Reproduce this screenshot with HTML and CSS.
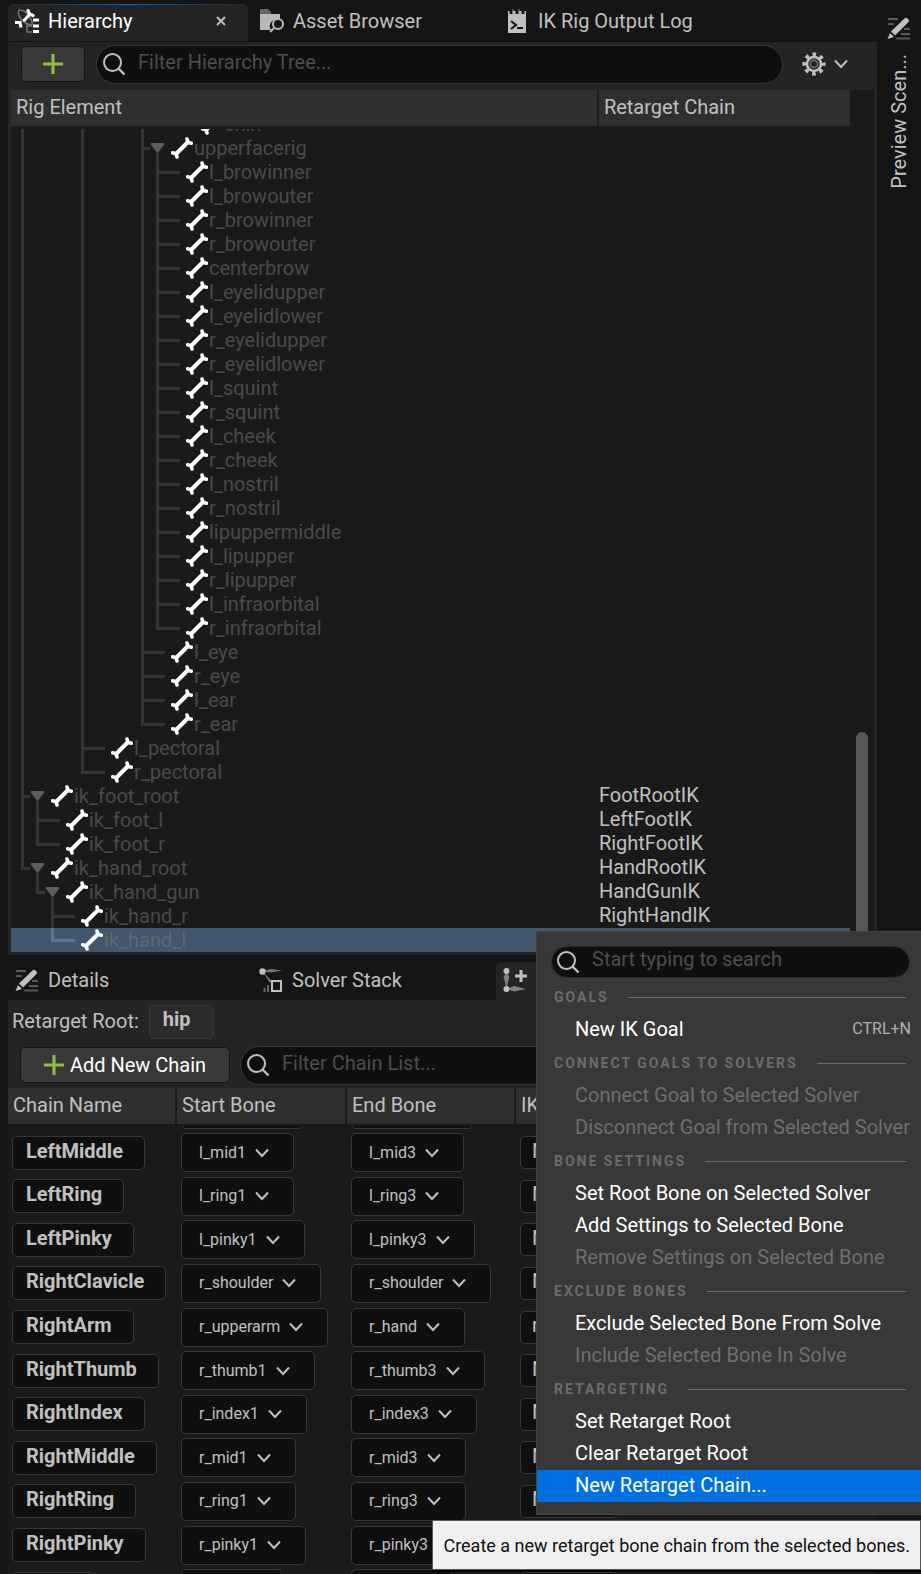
FILE: index.html
```html
<!DOCTYPE html>
<html lang="en">
<head>
<meta charset="utf-8">
<title>IK Rig Editor</title>
<link rel="stylesheet" href="styles.css">
</head>
<body>
<svg class="defs" aria-hidden="true">
  <symbol id="bone" viewBox="0 0 22 22"><path d="M16 2l1 3.200 3.400 1M6 20l-1-3.200-3.400-1" fill="none" stroke="#fff" stroke-width="3.600" stroke-linecap="round" stroke-linejoin="round"/><path d="M5 17l12-12" stroke="#fff" stroke-width="4"/></symbol>
  <symbol id="arrow" viewBox="0 0 15 24"><path d="M1.500 7h12q1.500 .5 .6 1.800l-5.400 7q-1.200 1.200-2.400 0l-5.400-7Q0 7.500 1.500 7z" fill="#5e5e5e"/></symbol>
  <symbol id="magnifier" viewBox="0 0 24 24"><circle cx="10.500" cy="10.500" r="8.500" fill="none" stroke="#c0c0c0" stroke-width="2"/><path d="M16.500 16.500l6 6" stroke="#c0c0c0" stroke-width="2.400"/></symbol>
  <symbol id="plus" viewBox="0 0 20 20"><path d="M10 0v20M0 10h20" stroke="#8bc24a" stroke-width="3"/></symbol>
  <symbol id="chevron" viewBox="0 0 14 10"><path d="M1 1.500l6 6.500 6-6.500" fill="none" stroke="#c0c0c0" stroke-width="2"/></symbol>
  <symbol id="pencil" viewBox="0 0 24 24"><path d="M1 3h10M1 8h6M17 13h6M14 18h9M9 22.500h14" stroke="#5a5a5a" stroke-width="1.800"/><path d="M17.500 2.500q1.500-1.500 3 0l1 1q1 1.500 0 2.500L8 19.500l-4-4zM3 17l4 4-6.500 2z" fill="#c0c0c0"/></symbol>
</svg>

<div class="editor">
  <div class="main">
    <nav class="tabs top-tabs">
      <div class="tab active">
        <svg class="tab-icon" viewBox="0 0 24 24"><path d="M4 1q-2 4 2 9t11 6M4 1q6 0 10 6t3 9" fill="none" stroke="#777" stroke-width="1.500"/><path d="M9.500 11l5.500-6M13 1.500l1.500 3.500 3.500 1.500" fill="none" stroke="#fff" stroke-width="3.200" stroke-linecap="round"/><path d="M0 13.500h5l1 5" fill="none" stroke="#fff" stroke-width="3.200"/><path d="M17 17h-5v6h5M12 17v-2" fill="none" stroke="#777" stroke-width="1.500"/><path d="M18 11h6M18 17h6M18 22.500h6" stroke="#fff" stroke-width="3"/></svg>
        <span>Hierarchy</span>
        <button class="close" aria-label="Close tab"><svg viewBox="0 0 10 10"><path d="M1 1l8 8M9 1l-8 8" stroke="#c0c0c0" stroke-width="2"/></svg></button>
      </div>
      <div class="tab">
        <svg class="tab-icon" viewBox="0 0 24 24"><path d="M0 1q0-1 1-1h7l3 3v3H0z" fill="#666"/><path d="M0 5h20v6a7 7 0 0 0-9 10H0z" fill="#b8b8b8"/><circle cx="18" cy="15" r="5" fill="none" stroke="#b8b8b8" stroke-width="2"/><path d="M14 19l-4 4" stroke="#b8b8b8" stroke-width="2"/></svg>
        <span>Asset Browser</span>
      </div>
      <div class="tab">
        <svg class="tab-icon" viewBox="0 0 24 24"><path d="M3 2h18v22H3z" fill="#c0c0c0"/><path d="M6 0v5M12 0v5M18 0v5" stroke="#161616" stroke-width="3"/><path d="M8 0v5M14 0v5" stroke="#888"/><path d="M6 12l5 4-5 4M12 19h6" fill="none" stroke="#161616" stroke-width="2.200"/></svg>
        <span>IK Rig Output Log</span>
      </div>
    </nav>

    <section class="panel hierarchy">
      <div class="toolbar">
        <button class="btn add" aria-label="Add"><svg><use href="#plus"/></svg></button>
        <label class="search"><svg><use href="#magnifier"/></svg><input type="text" placeholder="Filter Hierarchy Tree..." aria-label="Filter hierarchy tree"></label>
        <button class="options" aria-label="Options">
          <svg class="gear" viewBox="0 0 24 24"><circle cx="12" cy="12" r="9.600" fill="none" stroke="#c0c0c0" stroke-width="4" stroke-dasharray="3.600 3.940" stroke-dashoffset="1.800"/><circle cx="12" cy="12" r="7" fill="none" stroke="#c0c0c0" stroke-width="2.600"/><circle cx="12" cy="12" r="3.600" fill="none" stroke="#707070" stroke-width="1.600"/></svg>
          <svg class="chev"><use href="#chevron"/></svg>
        </button>
      </div>
      <div class="tree-area">
        <table class="tree">
          <thead><tr><th>Rig Element</th><th>Retarget Chain</th></tr></thead>
          <tbody>
            <tr><td><i class="v w4"></i><i class="v w4"></i><i class="v w2"></i><i class="gap"></i><svg class="bone"><use href="#bone"/></svg>chin</td><td></td></tr>
            <tr><td><i class="v w4"></i><i class="v w4"></i><i class="v t branch"></i><button class="fold" aria-label="Collapse"><svg><use href="#arrow"/></svg></button><svg class="bone"><use href="#bone"/></svg>upperfacerig</td><td></td></tr>
            <tr><td><i class="v w4"></i><i class="v w4"></i><i class="v"></i><i class="v t leaf"></i><svg class="bone"><use href="#bone"/></svg>l_browinner</td><td></td></tr>
            <tr><td><i class="v w4"></i><i class="v w4"></i><i class="v"></i><i class="v t leaf"></i><svg class="bone"><use href="#bone"/></svg>l_browouter</td><td></td></tr>
            <tr><td><i class="v w4"></i><i class="v w4"></i><i class="v"></i><i class="v t leaf"></i><svg class="bone"><use href="#bone"/></svg>r_browinner</td><td></td></tr>
            <tr><td><i class="v w4"></i><i class="v w4"></i><i class="v"></i><i class="v t leaf"></i><svg class="bone"><use href="#bone"/></svg>r_browouter</td><td></td></tr>
            <tr><td><i class="v w4"></i><i class="v w4"></i><i class="v"></i><i class="v t leaf"></i><svg class="bone"><use href="#bone"/></svg>centerbrow</td><td></td></tr>
            <tr><td><i class="v w4"></i><i class="v w4"></i><i class="v"></i><i class="v t leaf"></i><svg class="bone"><use href="#bone"/></svg>l_eyelidupper</td><td></td></tr>
            <tr><td><i class="v w4"></i><i class="v w4"></i><i class="v"></i><i class="v t leaf"></i><svg class="bone"><use href="#bone"/></svg>l_eyelidlower</td><td></td></tr>
            <tr><td><i class="v w4"></i><i class="v w4"></i><i class="v"></i><i class="v t leaf"></i><svg class="bone"><use href="#bone"/></svg>r_eyelidupper</td><td></td></tr>
            <tr><td><i class="v w4"></i><i class="v w4"></i><i class="v"></i><i class="v t leaf"></i><svg class="bone"><use href="#bone"/></svg>r_eyelidlower</td><td></td></tr>
            <tr><td><i class="v w4"></i><i class="v w4"></i><i class="v"></i><i class="v t leaf"></i><svg class="bone"><use href="#bone"/></svg>l_squint</td><td></td></tr>
            <tr><td><i class="v w4"></i><i class="v w4"></i><i class="v"></i><i class="v t leaf"></i><svg class="bone"><use href="#bone"/></svg>r_squint</td><td></td></tr>
            <tr><td><i class="v w4"></i><i class="v w4"></i><i class="v"></i><i class="v t leaf"></i><svg class="bone"><use href="#bone"/></svg>l_cheek</td><td></td></tr>
            <tr><td><i class="v w4"></i><i class="v w4"></i><i class="v"></i><i class="v t leaf"></i><svg class="bone"><use href="#bone"/></svg>r_cheek</td><td></td></tr>
            <tr><td><i class="v w4"></i><i class="v w4"></i><i class="v"></i><i class="v t leaf"></i><svg class="bone"><use href="#bone"/></svg>l_nostril</td><td></td></tr>
            <tr><td><i class="v w4"></i><i class="v w4"></i><i class="v"></i><i class="v t leaf"></i><svg class="bone"><use href="#bone"/></svg>r_nostril</td><td></td></tr>
            <tr><td><i class="v w4"></i><i class="v w4"></i><i class="v"></i><i class="v t leaf"></i><svg class="bone"><use href="#bone"/></svg>lipuppermiddle</td><td></td></tr>
            <tr><td><i class="v w4"></i><i class="v w4"></i><i class="v"></i><i class="v t leaf"></i><svg class="bone"><use href="#bone"/></svg>l_lipupper</td><td></td></tr>
            <tr><td><i class="v w4"></i><i class="v w4"></i><i class="v"></i><i class="v t leaf"></i><svg class="bone"><use href="#bone"/></svg>r_lipupper</td><td></td></tr>
            <tr><td><i class="v w4"></i><i class="v w4"></i><i class="v"></i><i class="v t leaf"></i><svg class="bone"><use href="#bone"/></svg>l_infraorbital</td><td></td></tr>
            <tr><td><i class="v w4"></i><i class="v w4"></i><i class="v"></i><i class="v t leaf last"></i><svg class="bone"><use href="#bone"/></svg>r_infraorbital</td><td></td></tr>
            <tr><td><i class="v w4"></i><i class="v w4"></i><i class="v t leaf"></i><svg class="bone"><use href="#bone"/></svg>l_eye</td><td></td></tr>
            <tr><td><i class="v w4"></i><i class="v w4"></i><i class="v t leaf"></i><svg class="bone"><use href="#bone"/></svg>r_eye</td><td></td></tr>
            <tr><td><i class="v w4"></i><i class="v w4"></i><i class="v t leaf"></i><svg class="bone"><use href="#bone"/></svg>l_ear</td><td></td></tr>
            <tr><td><i class="v w4"></i><i class="v w4"></i><i class="v t leaf last"></i><svg class="bone"><use href="#bone"/></svg>r_ear</td><td></td></tr>
            <tr><td><i class="v w4"></i><i class="v t leaf"></i><svg class="bone"><use href="#bone"/></svg>l_pectoral</td><td></td></tr>
            <tr><td><i class="v w4"></i><i class="v t leaf last"></i><svg class="bone"><use href="#bone"/></svg>r_pectoral</td><td></td></tr>
            <tr><td><i class="v t branch"></i><button class="fold" aria-label="Collapse"><svg><use href="#arrow"/></svg></button><svg class="bone"><use href="#bone"/></svg>ik_foot_root</td><td>FootRootIK</td></tr>
            <tr><td><i class="v"></i><i class="v t leaf"></i><svg class="bone"><use href="#bone"/></svg>ik_foot_l</td><td>LeftFootIK</td></tr>
            <tr><td><i class="v"></i><i class="v t leaf last"></i><svg class="bone"><use href="#bone"/></svg>ik_foot_r</td><td>RightFootIK</td></tr>
            <tr><td><i class="v t branch last"></i><button class="fold" aria-label="Collapse"><svg><use href="#arrow"/></svg></button><svg class="bone"><use href="#bone"/></svg>ik_hand_root</td><td>HandRootIK</td></tr>
            <tr><td><i></i><i class="v t branch last"></i><button class="fold" aria-label="Collapse"><svg><use href="#arrow"/></svg></button><svg class="bone"><use href="#bone"/></svg>ik_hand_gun</td><td>HandGunIK</td></tr>
            <tr><td><i></i><i></i><i class="v t leaf"></i><svg class="bone"><use href="#bone"/></svg>ik_hand_r</td><td>RightHandIK</td></tr>
            <tr class="selected"><td><i></i><i></i><i class="v t leaf last"></i><svg class="bone"><use href="#bone"/></svg>ik_hand_l</td><td></td></tr>
          </tbody>
        </table>
        <div class="rail"><div class="thumb"></div></div>
      </div>
    </section>

    <nav class="tabs bottom-tabs">
      <div class="tab"><svg class="tab-icon"><use href="#pencil"/></svg><span>Details</span></div>
      <div class="tab">
        <svg class="tab-icon" viewBox="0 0 24 24"><path d="M3 3l9-2 11 1.500-11 2zM4 4l9 9-2 2z" fill="#777"/><circle cx="3.500" cy="3.500" r="3.200" fill="#c0c0c0"/><path d="M5.500 20v4M9 17v7" stroke="#666" stroke-width="2"/><path d="M13 13h9v10h-9z" fill="none" stroke="#c0c0c0" stroke-width="2"/></svg>
        <span>Solver Stack</span>
      </div>
      <div class="tab active">
        <svg class="tab-icon" viewBox="0 0 24 24"><path d="M3.500 4l3 5-2.500 9h-1L.5 9zM4 21l7-3 12 3-12 2.500z" fill="#808080"/><circle cx="3.500" cy="3" r="3" fill="#c0c0c0"/><circle cx="3.500" cy="21" r="3" fill="#c0c0c0"/><path d="M18 2v12M12 8h12" stroke="#c0c0c0" stroke-width="3"/></svg>
        <span>IK Retargeting</span>
      </div>
    </nav>

    <section class="panel retarget">
      <div class="root-row"><span>Retarget Root:</span><button class="root-bone">hip</button></div>
      <div class="chain-tools">
        <button class="btn add-chain"><svg><use href="#plus"/></svg>Add New Chain</button>
        <label class="search"><svg><use href="#magnifier"/></svg><input type="text" placeholder="Filter Chain List..." aria-label="Filter chain list"></label>
      </div>
      <table class="chains">
        <thead><tr><th>Chain Name</th><th>Start Bone</th><th>End Bone</th><th>IK Goal</th><th></th></tr></thead>
        <tbody>
          <tr class="partial"><td></td><td><button class="combo" aria-label="Start bone"></button></td><td><button class="combo" aria-label="End bone"></button></td><td></td><td></td></tr>
          <tr><td><button class="name">LeftMiddle</button></td><td><button class="combo">l_mid1<svg><use href="#chevron"/></svg></button></td><td><button class="combo">l_mid3<svg><use href="#chevron"/></svg></button></td><td><button class="goal">None</button></td><td></td></tr>
          <tr><td><button class="name">LeftRing</button></td><td><button class="combo">l_ring1<svg><use href="#chevron"/></svg></button></td><td><button class="combo">l_ring3<svg><use href="#chevron"/></svg></button></td><td><button class="goal">None</button></td><td></td></tr>
          <tr><td><button class="name">LeftPinky</button></td><td><button class="combo">l_pinky1<svg><use href="#chevron"/></svg></button></td><td><button class="combo">l_pinky3<svg><use href="#chevron"/></svg></button></td><td><button class="goal">None</button></td><td></td></tr>
          <tr><td><button class="name">RightClavicle</button></td><td><button class="combo">r_shoulder<svg><use href="#chevron"/></svg></button></td><td><button class="combo">r_shoulder<svg><use href="#chevron"/></svg></button></td><td><button class="goal">None</button></td><td></td></tr>
          <tr><td><button class="name">RightArm</button></td><td><button class="combo">r_upperarm<svg><use href="#chevron"/></svg></button></td><td><button class="combo">r_hand<svg><use href="#chevron"/></svg></button></td><td><button class="goal">r_hand</button></td><td></td></tr>
          <tr><td><button class="name">RightThumb</button></td><td><button class="combo">r_thumb1<svg><use href="#chevron"/></svg></button></td><td><button class="combo">r_thumb3<svg><use href="#chevron"/></svg></button></td><td><button class="goal">None</button></td><td></td></tr>
          <tr><td><button class="name">RightIndex</button></td><td><button class="combo">r_index1<svg><use href="#chevron"/></svg></button></td><td><button class="combo">r_index3<svg><use href="#chevron"/></svg></button></td><td><button class="goal">None</button></td><td></td></tr>
          <tr><td><button class="name">RightMiddle</button></td><td><button class="combo">r_mid1<svg><use href="#chevron"/></svg></button></td><td><button class="combo">r_mid3<svg><use href="#chevron"/></svg></button></td><td><button class="goal">None</button></td><td></td></tr>
          <tr><td><button class="name">RightRing</button></td><td><button class="combo">r_ring1<svg><use href="#chevron"/></svg></button></td><td><button class="combo">r_ring3<svg><use href="#chevron"/></svg></button></td><td><button class="goal">None</button></td><td></td></tr>
          <tr><td><button class="name">RightPinky</button></td><td><button class="combo">r_pinky1<svg><use href="#chevron"/></svg></button></td><td><button class="combo">r_pinky3<svg><use href="#chevron"/></svg></button></td><td><button class="goal">None</button></td><td></td></tr>
          <tr class="partial"><td><button class="name" aria-label="Chain name"></button></td><td><button class="combo" aria-label="Start bone"></button></td><td><button class="combo" aria-label="End bone"></button></td><td><button class="goal" aria-label="Goal"></button></td><td></td></tr>
        </tbody>
      </table>
    </section>
  </div>

  <aside class="sidebar">
    <svg class="tab-icon"><use href="#pencil"/></svg>
    <span>Preview Scen...</span>
  </aside>
</div>

<div class="menu">
  <label class="search"><svg><use href="#magnifier"/></svg><input type="text" placeholder="Start typing to search" aria-label="Search menu"></label>
  <h2>Goals</h2>
  <button class="item">New IK Goal<kbd>CTRL+N</kbd></button>
  <h2>Connect Goals to Solvers</h2>
  <button class="item" disabled>Connect Goal to Selected Solver</button>
  <button class="item" disabled>Disconnect Goal from Selected Solver</button>
  <h2>Bone Settings</h2>
  <button class="item">Set Root Bone on Selected Solver</button>
  <button class="item">Add Settings to Selected Bone</button>
  <button class="item" disabled>Remove Settings on Selected Bone</button>
  <h2>Exclude Bones</h2>
  <button class="item">Exclude Selected Bone From Solve</button>
  <button class="item" disabled>Include Selected Bone In Solve</button>
  <h2>Retargeting</h2>
  <button class="item">Set Retarget Root</button>
  <button class="item">Clear Retarget Root</button>
  <button class="item current">New Retarget Chain...</button>
</div>
<div class="tooltip" role="tooltip">Create a new retarget bone chain from the selected bones.</div>
</body>
</html>
```
FILE: styles.css
```css
:root {
  --frame: #151515;
  --panel: #242424;
  --list: #1a1a1a;
  --header: #2f2f2f;
  --field: #0f0f0f;
  --edge: #383838;
  --text: #c0c0c0;
  --wire: #353535;
}

* { box-sizing: border-box; }

body {
  margin: 0;
  position: relative;
  height: 100vh;
  overflow: hidden;
  background: var(--frame);
  color: var(--text);
  font: 20px/24px Roboto, "Liberation Sans", sans-serif;
  white-space: nowrap;
}

button, input {
  font: inherit;
  color: inherit;
  background: none;
  border: 0;
  padding: 0;
  margin: 0;
  outline: 0;
}

svg { display: block; flex: none; }
.defs { display: none; }

.editor { display: flex; height: 100%; }
.main {
  flex: 1;
  min-width: 0;
  display: flex;
  flex-direction: column;
  padding-left: 8px;
}

/* Tabs */
.tabs { display: flex; gap: 5px; flex: none; }
.top-tabs { height: 42px; padding: 4px 0 1px; }
.bottom-tabs { height: 45px; padding-top: 7px; }
.tab {
  display: flex;
  align-items: center;
  gap: 9px;
  width: 240px;
  padding: 0 14px 3px 7px;
  border-radius: 6px 6px 0 0;
}
.bottom-tabs .tab { gap: 9px; width: 239px; }
.tab-icon { width: 24px; height: 24px; }
.tab.active { background: var(--panel); }
.top-tabs .active {
  color: #fff;
  background: linear-gradient(90deg, transparent, #0070e0, transparent) top / 100% 1px no-repeat, var(--panel);
}
.close { margin-left: auto; padding: 8px; }
.close svg { width: 10px; height: 10px; }

/* Shared controls */
.panel { background: var(--panel); }
.btn {
  display: flex;
  align-items: center;
  justify-content: center;
  gap: 6px;
  height: 36px;
  color: #fff;
  background: #383838;
  border: 1px solid #141414;
  border-radius: 5px;
}
.btn svg { width: 20px; height: 20px; }
.search {
  display: flex;
  align-items: center;
  flex: 1;
  gap: 12px;
  height: 39px;
  padding: 0 5px;
  background: var(--field);
  border: 1px solid var(--edge);
  border-radius: 20px;
}
.search svg { width: 24px; height: 24px; }
.search input { flex: 1; min-width: 0; height: 28px; padding-bottom: 4px; }
.search input::placeholder { color: #4e4e4e; opacity: 1; }

/* Hierarchy panel */
.hierarchy { flex: none; padding: 0 3px 3px; }
.toolbar {
  display: flex;
  align-items: center;
  height: 48px;
  padding: 0 26px 4px 10px;
}
.add { width: 64px; margin-right: 11px; }
.options { display: flex; align-items: center; gap: 8px; margin-left: 19px; }
.gear { width: 24px; height: 24px; }
.chev { width: 14px; height: 10px; }

.tree-area { display: flex; background: var(--list); }
.tree { flex: 1; display: block; }
.tree thead, .tree tbody { display: block; }
.tree tr {
  display: grid;
  grid-template-columns: 7fr 3fr;
  gap: 2px;
}
.tree th {
  height: 36px;
  padding: 5px;
  background: var(--header);
  font-weight: 400;
  text-align: left;
}
.tree tbody { height: 823px; margin-top: 3px; overflow: hidden; }
.tree tbody tr { height: 24px; }
.tree tbody tr:first-child { margin-top: -17px; }
.tree td { padding: 0; }
.tree td:last-child { line-height: 22px; }
.tree td:first-child { display: flex; padding-left: 10px; color: #4a4a4a; }
.tree i { flex: none; width: 15px; height: 24px; }
.tree .v { background: linear-gradient(var(--wire), var(--wire)) 0 0 / 3px 100% no-repeat; }
.tree .t {
  background:
    linear-gradient(var(--wire), var(--wire)) 0 0 / 3px 100% no-repeat,
    linear-gradient(var(--wire), var(--wire)) 3px 11px / 21px 3px no-repeat;
}
.tree .last { background-size: 3px 14px, 21px 3px; }
.tree .w4 { width: 60px; }
.tree .w2 { width: 30px; }
.tree .gap { width: 30px; }
.tree .leaf { width: 30px; }
.tree .branch { width: 9px; }
.fold {
  width: 15px;
  height: 24px;
  margin-right: 6px;
  background: linear-gradient(var(--wire), var(--wire)) 6px 14px / 3px 10px no-repeat;
}
.fold svg { width: 15px; height: 24px; }
.bone { width: 22px; height: 22px; margin: 1px 1px 0 0; }
.selected { --wire: #5d7690; background: #42566e; }
.tree .selected td:first-child { color: #5f6872; }

.rail { width: 24px; padding: 642px 6px 0; }
.thumb { height: 100%; background: #575757; border-radius: 6px 6px 0 0; }

/* Retarget panel */
.retarget { flex: 1; min-height: 0; overflow: hidden; }
.root-row {
  display: flex;
  align-items: center;
  gap: 10px;
  height: 43px;
  padding-left: 4px;
}
.root-row span { padding-bottom: 2px; }
.root-bone {
  height: 34px;
  padding: 0 22px 6px 13px;
  background: #2b2b2b;
  border: 1px solid var(--edge);
  border-radius: 5px;
  font-weight: 700;
}
.chain-tools {
  display: flex;
  align-items: center;
  height: 45px;
  padding: 0 40px 1px 12px;
  gap: 10px;
}
.add-chain { width: 210px; }

.chains, .chains thead, .chains tbody { display: block; }
.chains { background: var(--list); }
.chains tr {
  display: grid;
  grid-template-columns: 167px 168px 167px 168px 1fr;
  gap: 2px;
}
.chains th {
  height: 36px;
  padding: 5px;
  background: var(--header);
  font-weight: 400;
  text-align: left;
}
.chains tbody { margin-top: 2px; overflow: hidden; }
.chains tbody tr { height: 44px; align-items: center; }
.chains tbody tr:nth-child(5n + 2), .chains tbody tr:nth-child(5n + 4) { height: 43px; }
.chains tbody tr:first-child { margin-top: -39px; }
.chains td { padding: 0 4px; }
.chains button {
  display: flex;
  align-items: center;
  background: var(--field);
  border: 1px solid var(--edge);
  border-radius: 5px;
}
.chains .name { height: 34px; padding: 0 21px 4px 13px; font-weight: 700; }
.chains .combo { height: 39px; gap: 9px; padding: 0 24px 0 17px; font-size: 16px; }
.combo svg { width: 14px; height: 10px; }
.chains .goal { height: 33px; width: 98px; padding: 0 11px 4px; }
.partial .name { width: 83px; }
.partial .combo { width: 101px; }
.partial:first-child .combo { width: 122px; }

/* Side dock */
.sidebar {
  flex: none;
  display: flex;
  flex-direction: column;
  align-items: center;
  gap: 14px;
  width: 44px;
  padding-top: 16px;
}
.sidebar span { writing-mode: vertical-rl; transform: rotate(180deg); }

/* Context menu */
.menu {
  position: absolute;
  top: 931px;
  right: 0;
  width: 385px;
  padding: 14px 0 12px;
  background: #383838;
  border: 1px solid #444;
  border-right: 0;
}
.menu .search { height: 32px; margin: 0 11px 2px 14px; padding: 0 4px; border-color: #2c2c2c; }
.menu .search input { padding-bottom: 6px; }
.menu h2 {
  display: flex;
  align-items: center;
  gap: 19px;
  height: 34px;
  margin: 0;
  padding: 0 15px 0 17px;
  font-size: 14px;
  letter-spacing: 2px;
  text-transform: uppercase;
  color: #6c6c6c;
}
.menu h2::after { content: ""; flex: 1; height: 1px; background: #6c6c6c; }
.item {
  display: flex;
  align-items: center;
  width: 100%;
  height: 32px;
  padding: 0 10px 2px 38px;
  color: #fff;
}
.item:disabled { color: #6f6f6f; }
.item.current { background: #0070e0; }
.item kbd { margin-left: auto; font: 16px/24px Roboto, sans-serif; color: #b0b0b0; }

.tooltip {
  position: absolute;
  right: 0;
  top: 1520px;
  padding: 13px 10px 11px;
  background: #efefef;
  border: 1px solid #555;
  box-shadow: 0 2px 0 #000;
  color: #111;
  font-size: 18px;
}
```
